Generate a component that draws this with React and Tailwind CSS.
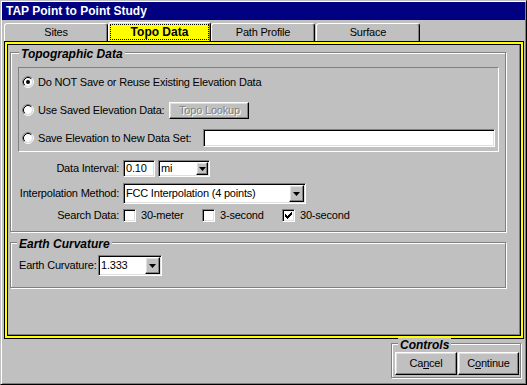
import React from "react";

const raised =
  "border border-t-white border-l-white border-r-black border-b-black shadow-[inset_-1px_-1px_#808080,inset_1px_1px_#dfdfdf]";
const sunken =
  "border border-t-[#808080] border-l-[#808080] border-r-white border-b-white shadow-[inset_1px_1px_#000,inset_-1px_-1px_#dfdfdf]";
const etched = "border border-[#808080] shadow-[inset_1px_1px_#fff,1px_1px_#fff]";

function Radio({ checked }) {
  return (
    <svg width="12" height="12" viewBox="0 0 12 12" className="shrink-0">
      <circle cx="6" cy="6" r="4" fill="#fff" />
      <path d="M9.89 2.11A5.5 5.5 0 0 0 2.11 9.89" fill="none" stroke="#808080" />
      <path d="M2.11 9.89A5.5 5.5 0 0 0 9.89 2.11" fill="none" stroke="#fff" />
      <path d="M9.18 2.82A4.5 4.5 0 0 0 2.82 9.18" fill="none" stroke="#000" />
      <path d="M2.82 9.18A4.5 4.5 0 0 0 9.18 2.82" fill="none" stroke="#dfdfdf" />
      {checked && <circle cx="6" cy="6" r="2" fill="#000" />}
    </svg>
  );
}

function Check({ checked }) {
  return (
    <div className={`w-[13px] h-[13px] bg-white shrink-0 flex items-center justify-center ${sunken}`}>
      {checked && (
        <svg width="7" height="7" viewBox="0 0 7 7" shapeRendering="crispEdges">
          <rect x="6" y="0" width="1" height="1" />
          <rect x="5" y="1" width="2" height="1" />
          <rect x="0" y="2" width="1" height="1" />
          <rect x="4" y="2" width="3" height="1" />
          <rect x="0" y="3" width="2" height="1" />
          <rect x="3" y="3" width="3" height="1" />
          <rect x="0" y="4" width="5" height="1" />
          <rect x="1" y="5" width="3" height="1" />
          <rect x="2" y="6" width="1" height="1" />
        </svg>
      )}
    </div>
  );
}

function Combo({ value, className, btn }) {
  return (
    <div className={`flex bg-white ${sunken} ${className}`}>
      <div className="flex-1 pl-[2px] flex items-center whitespace-nowrap overflow-hidden">
        {value}
      </div>
      <div className={`m-px flex items-center justify-center bg-[#c0c0c0] ${raised} ${btn}`}>
        <svg width="7" height="4" viewBox="0 0 7 4">
          <polygon points="0,0 7,0 3.5,4" fill="#000" />
        </svg>
      </div>
    </div>
  );
}

function GroupTitle({ children, className }) {
  return (
    <div
      className={`absolute top-[-6px] px-[2px] bg-[#c0c0c0] font-bold italic text-[12px] leading-[14px] tracking-normal ${className}`}
    >
      {children}
    </div>
  );
}

export default function App() {
  return (
    <div className="w-[527px] h-[385px] bg-[#c0c0c0] font-['Liberation_Sans',Arial,sans-serif] text-[11px] leading-[13px] tracking-[-0.2px] text-black border border-t-[#c0c0c0] border-l-[#c0c0c0] border-r-black border-b-black shadow-[inset_1px_1px_#fff,inset_-1px_-1px_#808080] p-px flex flex-col overflow-hidden">

      {/* Title bar */}
      <div className="h-[18px] bg-[#000080] text-white font-bold text-[12px] tracking-normal pl-[4px] flex items-center">
        TAP Point to Point Study
      </div>

      {/* Tabs */}
      <div className="h-[21px] pl-[2px] flex items-end">
        <div className="w-[104px] h-[18px] border-t border-l border-r border-t-white border-l-white border-r-black rounded-t-[3px] shadow-[inset_-1px_0_#808080] flex items-center justify-center">
          Sites
        </div>
        <div className="w-[103px] h-[19px] bg-[#ffff00] border-t border-l border-r border-t-white border-l-white border-r-black rounded-t-[3px] shadow-[inset_-1px_0_#808080] p-[1px] flex">
          <div className="flex-1 border border-dotted border-black flex items-center justify-center font-bold text-[12px] tracking-normal">
            Topo Data
          </div>
        </div>
        <div className="w-[104px] h-[18px] border-t border-l border-r border-t-white border-l-white border-r-black rounded-t-[3px] shadow-[inset_-1px_0_#808080] flex items-center justify-center">
          Path Profile
        </div>
        <div className="ml-[1px] w-[104px] h-[18px] border-t border-l border-r border-t-white border-l-white border-r-black rounded-t-[3px] shadow-[inset_-1px_0_#808080] flex items-center justify-center">
          Surface
        </div>
      </div>

      {/* Tab panel */}
      <div className="ml-[2px] w-[520px] h-[298px] border border-black shadow-[inset_0_0_0_2px_#ffff00,inset_0_0_0_3px_#000,inset_-4px_-4px_0_#808080] pl-[5px] pt-[10px]">

        {/* Topographic Data */}
        <div className={`relative w-[496px] h-[180px] ${etched}`}>
          <GroupTitle className="left-[8px]">Topographic Data</GroupTitle>

          <div className="ml-[7px] mt-[14px] w-[481px] h-[85px] border border-t-[#808080] border-l-[#808080] border-r-white border-b-white pl-[3px]">
            <div className="h-[28px] flex items-center gap-[4px]">
              <Radio checked />
              <span>Do NOT Save or Reuse Existing Elevation Data</span>
            </div>
            <div className="h-[28px] flex items-center gap-[4px]">
              <Radio />
              <span>Use Saved Elevation Data:</span>
              <div className={`ml-[1px] w-[80px] h-[17px] flex items-center justify-center text-[#808080] [text-shadow:1px_1px_0_#fff] ${raised}`}>
                Topo Lookup
              </div>
            </div>
            <div className="h-[28px] flex items-center gap-[4px] pr-[3px]">
              <Radio />
              <span className="w-[159px] whitespace-nowrap">Save Elevation to New Data Set:</span>
              <div className={`ml-[2px] flex-1 h-[18px] bg-white ${sunken}`} />
            </div>
          </div>

          {/* Data Interval */}
          <div className="mt-[8px] h-[17px] flex items-center gap-[4px]">
            <span className="w-[108px] text-right">Data Interval:</span>
            <div className={`w-[32px] h-[17px] bg-white pl-[2px] flex items-center ${sunken}`}>0.10</div>
            <Combo value="mi" className="ml-[-1px] w-[52px] h-[17px]" btn="w-[12px]" />
          </div>

          {/* Interpolation */}
          <div className="mt-[6px] h-[21px] flex items-center gap-[4px]">
            <span className="w-[108px] text-right whitespace-nowrap">Interpolation Method:</span>
            <Combo value="FCC Interpolation (4 points)" className="w-[183px] h-[21px]" btn="w-[15px]" />
          </div>

          {/* Search Data */}
          <div className="mt-[5px] h-[13px] flex items-center gap-[4px]">
            <span className="w-[108px] text-right">Search Data:</span>
            <div className="w-[79px] flex items-center gap-[5px]">
              <Check />
              <span>30-meter</span>
            </div>
            <div className="ml-[-4px] w-[80px] flex items-center gap-[5px]">
              <Check />
              <span>3-second</span>
            </div>
            <div className="ml-[-4px] flex items-center gap-[5px]">
              <Check checked />
              <span>30-second</span>
            </div>
          </div>
        </div>

        {/* Earth Curvature */}
        <div className={`relative mt-[10px] w-[496px] h-[46px] ${etched}`}>
          <GroupTitle className="left-[6px]">Earth Curvature</GroupTitle>
          <div className="pt-[12px] pl-[8px] flex items-center gap-[3px]">
            <span className="w-[76px] whitespace-nowrap">Earth Curvature:</span>
            <Combo value="1.333" className="w-[64px] h-[21px]" btn="w-[15px]" />
          </div>
        </div>
      </div>

      {/* Bottom controls */}
      <div className="flex-1 flex justify-end pr-[4px] pt-[4px]">
        <div className={`relative w-[130px] h-[35px] ${etched} pl-[3px] pt-[8px] flex`}>
          <GroupTitle className="left-[6px]">Controls</GroupTitle>
          <button className={`w-[62px] h-[23px] bg-[#c0c0c0] flex items-center justify-center ${raised}`}>
            Ca<span className="underline">n</span>cel
          </button>
          <button className={`ml-[1px] w-[61px] h-[23px] bg-[#c0c0c0] flex items-center justify-center ${raised}`}>
            C<span className="underline">o</span>ntinue
          </button>
        </div>
      </div>
    </div>
  );
}
